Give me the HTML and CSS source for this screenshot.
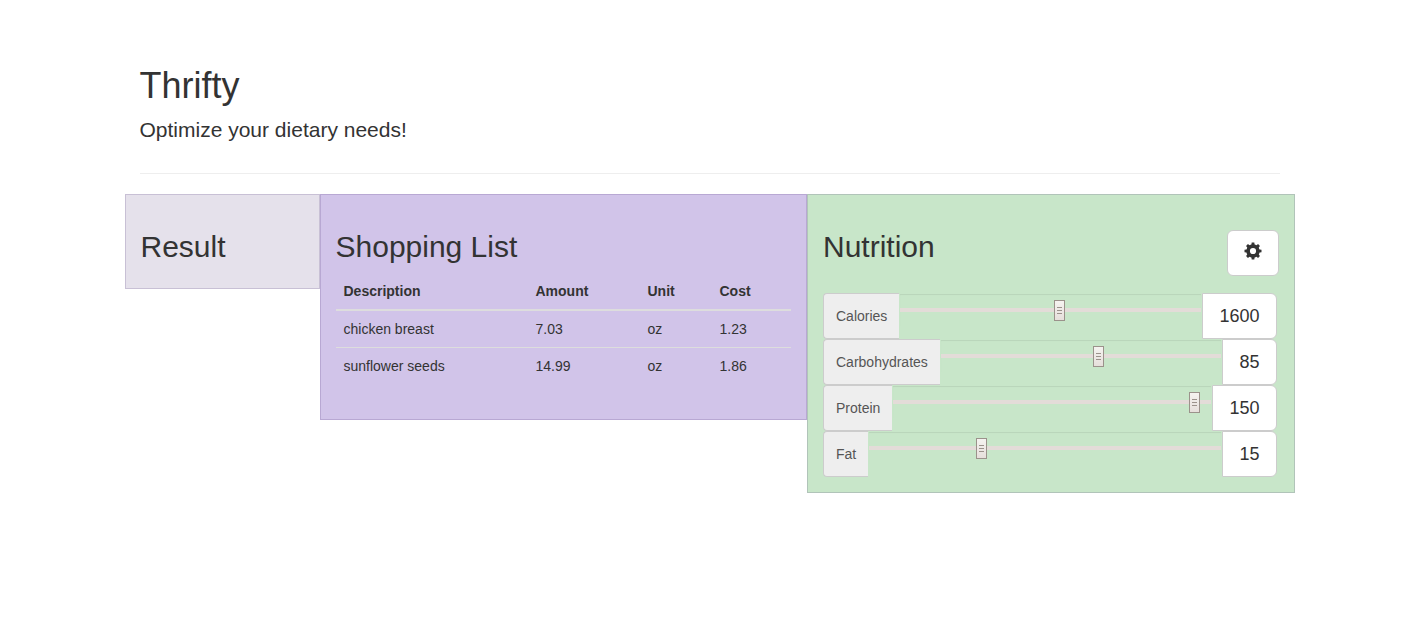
FILE: index.html
```html
<!DOCTYPE html>
<html lang="en">

<head>
    <meta charset="UTF-8">
    <meta name="viewport" content="width=device-width, initial-scale=1.0">
    <title>Thrifty</title>
    <link rel="stylesheet" href="styles.css">
</head>

<body>
    <div class="container">
        <header class="page-header">
            <h1>Thrifty</h1>
            <p class="lead">Optimize your dietary needs!</p>
        </header>

        <main class="row">
            <section class="panel result">
                <h2>Result</h2>
            </section>

            <section class="panel shopping">
                <h2>Shopping List</h2>
                <table class="table">
                    <thead>
                        <tr>
                            <th class="col-description">Description</th>
                            <th class="col-amount">Amount</th>
                            <th class="col-unit">Unit</th>
                            <th>Cost</th>
                        </tr>
                    </thead>
                    <tbody>
                        <tr>
                            <td>chicken breast</td>
                            <td>7.03</td>
                            <td>oz</td>
                            <td>1.23</td>
                        </tr>
                        <tr>
                            <td>sunflower seeds</td>
                            <td>14.99</td>
                            <td>oz</td>
                            <td>1.86</td>
                        </tr>
                    </tbody>
                </table>
            </section>

            <section class="panel nutrition">
                <div class="panel-heading">
                    <h2>Nutrition</h2>
                    <button type="button" class="btn" aria-label="Settings">
                        <svg class="icon" viewBox="0 0 18 18" aria-hidden="true">
                            <g fill="#333">
                                <path id="tooth" d="M7.2 4L7.7 0.5h2.6L10.8 4z" />
                                <use href="#tooth" transform="rotate(45 9 9)" />
                                <use href="#tooth" transform="rotate(90 9 9)" />
                                <use href="#tooth" transform="rotate(135 9 9)" />
                                <use href="#tooth" transform="rotate(180 9 9)" />
                                <use href="#tooth" transform="rotate(225 9 9)" />
                                <use href="#tooth" transform="rotate(270 9 9)" />
                                <use href="#tooth" transform="rotate(315 9 9)" />
                            </g>
                            <circle cx="9" cy="9" r="4.9" fill="none" stroke="#333" stroke-width="3.6" />
                        </svg>
                    </button>
                </div>
                <div class="input-group">
                    <label for="calories">Calories</label>
                    <input type="range" id="calories" min="0" max="3014" value="1600">
                    <button type="button" class="btn">1600</button>
                </div>
                <div class="input-group">
                    <label for="carbohydrates">Carbohydrates</label>
                    <input type="range" id="carbohydrates" min="0" max="151" value="85">
                    <button type="button" class="btn">85</button>
                </div>
                <div class="input-group">
                    <label for="protein">Protein</label>
                    <input type="range" id="protein" min="0" max="156" value="150">
                    <button type="button" class="btn">150</button>
                </div>
                <div class="input-group">
                    <label for="fat">Fat</label>
                    <input type="range" id="fat" min="0" max="48" value="15">
                    <button type="button" class="btn">15</button>
                </div>
            </section>
        </main>
    </div>
</body>

</html>
```
FILE: styles.css
```css
* {
    box-sizing: border-box;
}

body {
    margin: 0;
    padding: 5px 0 5px 4px;
    background-color: #fff;
    color: #333;
    font-family: "Liberation Sans", Arial, sans-serif;
    font-size: 14px;
    line-height: 20px;
}

h1,
h2 {
    margin: 20px 0 10px;
    font-weight: 500;
}

h1 {
    margin-top: 21px;
    font-size: 36px;
    line-height: 39px;
}

h2 {
    font-size: 30px;
    line-height: 33px;
}

.container {
    max-width: 1170px;
    margin: 0 auto;
    padding: 0 15px;
}

.page-header {
    padding: 40px 0 9px;
    margin-bottom: 20px;
    border-bottom: 1px solid #eee;
}

.lead {
    margin: 0 0 20px;
    font-size: 21px;
    line-height: 29px;
}

.row {
    display: grid;
    grid-template-columns: 2fr 5fr 5fr;
    align-items: start;
    margin: 0 -15px;
}

/* Panels */
.panel {
    min-width: 0;
    padding: 15px;
    border: 1px solid rgba(86, 61, 124, 0.2);
}

.result {
    background-color: #e5e1eb;
}

.shopping {
    background-color: #d1c4e9;
}

.nutrition {
    background-color: #c8e6c9;
}

.panel-heading {
    display: flex;
    justify-content: space-between;
    align-items: flex-start;
    margin: 20px 0 17px;
}

.panel-heading h2 {
    margin: 0;
}

/* Shopping list */
.table {
    width: 100%;
    margin-bottom: 20px;
    border-collapse: collapse;
}

.table th,
.table td {
    padding: 8px;
    text-align: left;
    vertical-align: top;
}

.table th {
    border-bottom: 2px solid #ddd;
}

.table td {
    border-top: 1px solid #ddd;
}

.col-description {
    width: 192px;
}

.col-amount {
    width: 112px;
}

.col-unit {
    width: 72px;
}

/* Nutrition controls */
.btn {
    padding: 10px 16px;
    border: 1px solid #ccc;
    border-radius: 6px;
    background-color: #fff;
    color: #333;
    font-family: inherit;
    font-size: 18px;
    line-height: 24px;
    cursor: pointer;
}

.icon {
    width: 18px;
    height: 18px;
    vertical-align: -1px;
}

.input-group {
    display: flex;
    align-items: flex-start;
    margin-right: 2px;
}

.input-group label {
    padding: 12px;
    border: 1px solid #ccc;
    border-right: 0;
    border-radius: 4px 0 0 4px;
    background-color: #eee;
    color: #555;
}

.input-group .btn {
    border-radius: 0 6px 6px 0;
}

input[type="range"] {
    flex: 1;
    min-width: 0;
    height: 34px;
    margin: 0;
    border: 1px solid transparent;
    background: transparent;
    box-shadow: inset 0 1px 1px rgba(0, 0, 0, 0.075);
    -webkit-appearance: none;
    appearance: none;
}

input[type="range"]::-webkit-slider-runnable-track {
    height: 4px;
    background-color: #e3dcd8;
}

/* three grip lines over a light gradient */
input[type="range"]::-webkit-slider-thumb {
    -webkit-appearance: none;
    width: 11px;
    height: 21px;
    margin-top: -8px;
    border: 1px solid #9b928b;
    background:
        linear-gradient(#9b928b, #9b928b) 2px 6px / 5px 1px no-repeat,
        linear-gradient(#9b928b, #9b928b) 2px 9px / 5px 1px no-repeat,
        linear-gradient(#9b928b, #9b928b) 2px 12px / 5px 1px no-repeat,
        linear-gradient(#f5f3f0, #e6dfdb);
}
```
